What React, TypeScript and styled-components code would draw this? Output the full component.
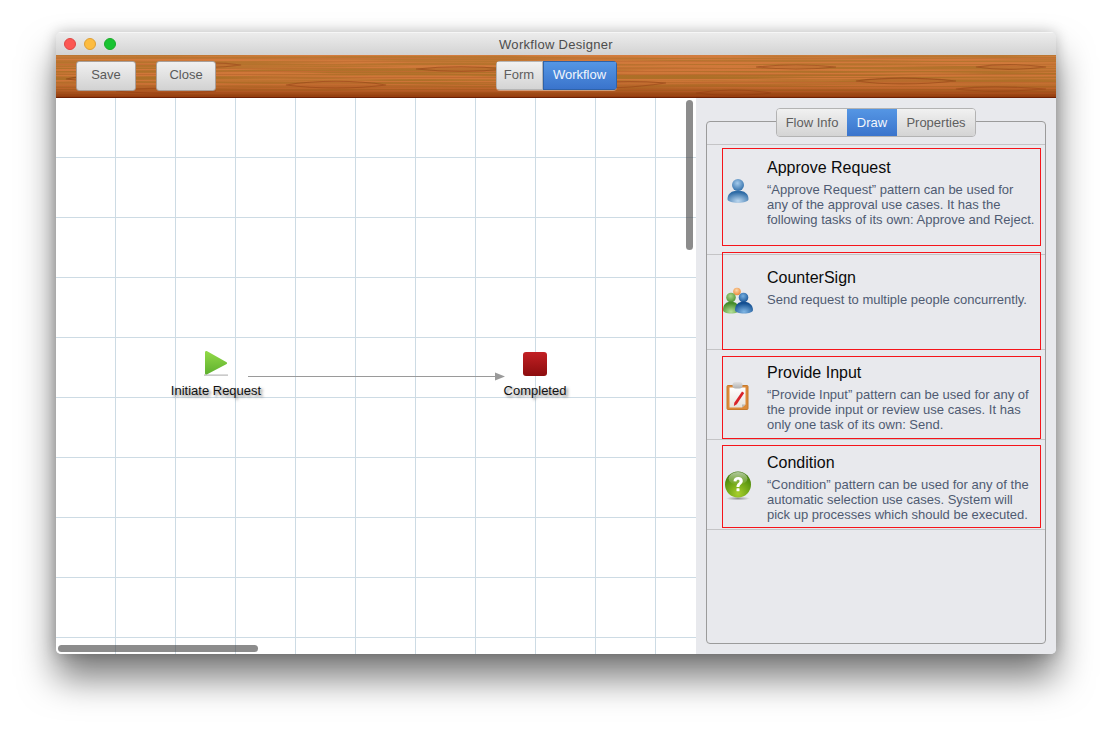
import React from "react";
import styled, { createGlobalStyle } from "styled-components";

const Global = createGlobalStyle`
  html, body { margin: 0; padding: 0; background: #fff; }
  body { font-family: "Liberation Sans", Arial, sans-serif; }
`;

const Page = styled.div`
  width: 1112px;
  height: 734px;
  padding: 32px 56px 0;
  box-sizing: border-box;
  overflow: hidden;
`;

const Win = styled.div`
  width: 1000px;
  height: 622px;
  border-radius: 5px;
  overflow: hidden;
  display: flex;
  flex-direction: column;
  background: #e8e9ed;
  box-shadow: 0 24px 36px rgba(0, 0, 0, 0.52), 0 0 14px rgba(0, 0, 0, 0.22);
`;

const TitleBar = styled.div`
  height: 23px;
  flex: none;
  position: relative;
  display: flex;
  align-items: center;
  justify-content: center;
  background: linear-gradient(#ececec, #d3d3d3);
  border-top: 1px solid #f6f6f6;
  box-sizing: border-box;
`;

const Traffic = styled.div`
  position: absolute;
  left: 8px;
  top: 5px;
  display: flex;
  gap: 8px;
`;

const Light = styled.span<{ $c: string; $b: string }>`
  width: 12px;
  height: 12px;
  border-radius: 50%;
  box-sizing: border-box;
  background: ${(p) => p.$c};
  border: 1px solid ${(p) => p.$b};
`;

const Title = styled.div`
  font-size: 13px;
  letter-spacing: 0.3px;
  color: #4d4d4d;
`;

const Toolbar = styled.div`
  height: 43px;
  flex: none;
  position: relative;
  display: grid;
  grid-template-columns: 1fr auto 1fr;
  align-items: start;
  padding-top: 6px;
  box-sizing: border-box;
  border-bottom: 1px solid #6e2004;
  background: #b9602a;
  overflow: hidden;
`;

const Wood = styled.svg`
  position: absolute;
  inset: 0;
  width: 100%;
  height: 100%;
`;

const ToolLeft = styled.div`
  position: relative;
  display: flex;
  gap: 20px;
  padding-left: 20px;
`;

const ToolButton = styled.button`
  width: 60px;
  height: 30px;
  padding: 0 0 3px;
  border: 1px solid #a89f9a;
  border-radius: 3px;
  background: linear-gradient(#f0f0f0, #d2d2d2);
  color: #5a5a5a;
  font: 13px "Liberation Sans", Arial, sans-serif;
`;

const Segment = styled.div`
  position: relative;
  display: flex;
  height: 29px;
  border-radius: 4px;
  overflow: hidden;
  box-shadow: 0 1px 0 rgba(255, 255, 255, 0.4);
`;

const SegItem = styled.div<{ $active?: boolean; $w: number }>`
  width: ${(p) => p.$w}px;
  display: flex;
  align-items: center;
  justify-content: center;
  padding-bottom: 2px;
  font-size: 13px;
  box-sizing: border-box;
  color: ${(p) => (p.$active ? "#f2f6fc" : "#5e5e5e")};
  background: ${(p) =>
    p.$active ? "linear-gradient(#5596e4, #3a74cc)" : "linear-gradient(#f1f1f1, #d4d4d4)"};
  border: 1px solid ${(p) => (p.$active ? "#2f62a8" : "#b5b5b5")};
`;

const Body = styled.div`
  flex: 1;
  display: flex;
  min-height: 0;
`;

const Canvas = styled.div`
  width: 640px;
  flex: none;
  position: relative;
  overflow: hidden;
  background-color: #fff;
  background-image:
    linear-gradient(to right, transparent 59px, #cddbe4 59px),
    linear-gradient(to bottom, transparent 59px, #cddbe4 59px);
  background-size: 60px 60px;
`;

const Node = styled.div<{ $x: number; $y: number; $w: number }>`
  position: absolute;
  left: ${(p) => p.$x}px;
  top: ${(p) => p.$y}px;
  width: ${(p) => p.$w}px;
  display: flex;
  flex-direction: column;
  align-items: center;
  gap: 6px;
`;

const NodeLabel = styled.div`
  font-size: 13px;
  line-height: 15px;
  color: #111;
  white-space: nowrap;
  text-shadow: 2px 2px 3px rgba(0, 0, 0, 0.5);
`;

const Connector = styled.svg`
  position: absolute;
  left: 190px;
  top: 270px;
`;

const VThumb = styled.div`
  position: absolute;
  left: 630px;
  top: 2px;
  width: 7px;
  height: 150px;
  border-radius: 4px;
  background: rgba(70, 70, 70, 0.62);
`;

const HThumb = styled.div`
  position: absolute;
  left: 2px;
  top: 547px;
  width: 200px;
  height: 7px;
  border-radius: 4px;
  background: rgba(70, 70, 70, 0.62);
`;

const Side = styled.div`
  flex: 1;
  padding: 23px 10px 10px;
  background: #e8e9ed;
`;

const Frame = styled.div`
  position: relative;
  height: 100%;
  box-sizing: border-box;
  border: 1px solid #9b9b9b;
  border-radius: 4px;
  padding-top: 22px;
`;

const Tabs = styled.div`
  position: absolute;
  top: -14px;
  left: 69px;
  display: flex;
  height: 29px;
  border-radius: 4px;
  overflow: hidden;
  border: 1px solid #b3b3b3;
  box-sizing: border-box;
`;

const Tab = styled.div<{ $active?: boolean; $w: number }>`
  width: ${(p) => p.$w}px;
  display: flex;
  align-items: center;
  justify-content: center;
  padding-bottom: 1px;
  font-size: 13px;
  color: ${(p) => (p.$active ? "#f2f6fc" : "#5e5e5e")};
  background: ${(p) =>
    p.$active ? "linear-gradient(#5596e4, #3a74cc)" : "linear-gradient(#f1f1f1, #d4d4d4)"};
`;

const List = styled.div`
  border-top: 1px solid #c4c4c6;
`;

const Row = styled.div<{ $h: number }>`
  position: relative;
  height: ${(p) => p.$h}px;
  box-sizing: border-box;
  border-bottom: 1px solid #c4c4c6;
  display: flex;
  padding-left: 15px;
`;

const Outline = styled.div<{ $top: number; $h: number }>`
  position: absolute;
  left: 15px;
  top: ${(p) => p.$top}px;
  width: 319px;
  height: ${(p) => p.$h}px;
  box-sizing: border-box;
  border: 1px solid #f5141a;
  pointer-events: none;
`;

const IconCell = styled.div`
  width: 32px;
  height: 92px;
  flex: none;
  display: flex;
  align-items: center;
  justify-content: center;
`;

const RowText = styled.div<{ $pad: number }>`
  margin-left: 13px;
  padding-top: ${(p) => p.$pad}px;
  width: 270px;
`;

const RowTitle = styled.div`
  font-size: 16px;
  line-height: 18px;
  color: #0b0b0b;
`;

const RowDesc = styled.div`
  margin-top: 5px;
  font-size: 13px;
  line-height: 15px;
  color: #4f5b72;
`;

const PersonIcon = () => (
  <svg width="24" height="26" viewBox="0 0 24 26">
    <defs>
      <radialGradient id="pa" cx="45%" cy="35%" r="70%">
        <stop offset="0" stopColor="#a5cbec" />
        <stop offset="1" stopColor="#2b6aa6" />
      </radialGradient>
      <radialGradient id="pb" cx="50%" cy="85%" r="70%">
        <stop offset="0" stopColor="#bcd8f0" />
        <stop offset="1" stopColor="#2f6ca6" />
      </radialGradient>
    </defs>
    <path d="M1.500 21c0-5 4-8.500 10.500-8.500S22.500 16 22.500 21c0 2.500-4.500 3.800-10.500 3.800S1.500 23.500 1.500 21z" fill="url(#pb)" />
    <circle cx="12" cy="7" r="6" fill="url(#pa)" />
  </svg>
);

const GroupIcon = () => (
  <svg width="32" height="28" viewBox="0 0 32 28">
    <defs>
      <radialGradient id="ga" cx="45%" cy="35%" r="70%">
        <stop offset="0" stopColor="#a8d68a" />
        <stop offset="1" stopColor="#4a9030" />
      </radialGradient>
      <radialGradient id="gb" cx="50%" cy="85%" r="70%">
        <stop offset="0" stopColor="#b4e096" />
        <stop offset="1" stopColor="#458c2c" />
      </radialGradient>
      <radialGradient id="gc" cx="45%" cy="35%" r="70%">
        <stop offset="0" stopColor="#74aee0" />
        <stop offset="1" stopColor="#134f92" />
      </radialGradient>
      <radialGradient id="gd" cx="50%" cy="85%" r="70%">
        <stop offset="0" stopColor="#80b6e4" />
        <stop offset="1" stopColor="#134f92" />
      </radialGradient>
      <radialGradient id="ge" cx="45%" cy="35%" r="70%">
        <stop offset="0" stopColor="#fcd8ac" />
        <stop offset="1" stopColor="#ea8430" />
      </radialGradient>
    </defs>
    <circle cx="15" cy="4.500" r="3.800" fill="url(#ge)" />
    <circle cx="9" cy="10.500" r="4.800" fill="url(#ga)" />
    <path d="M1 23c0-5 3-8.500 8-8.500s8 3.500 8 8.500c0 2-3 3.500-8 3.500S1 25 1 23z" fill="url(#gb)" />
    <circle cx="21.500" cy="10.500" r="4.800" fill="url(#gc)" />
    <path d="M13 23c0-5 3.500-8.500 8.500-8.500S31 18 31 23c0 2-4 3.500-9 3.500S13 25 13 23z" fill="url(#gd)" />
  </svg>
);

const ClipboardIcon = () => (
  <svg width="24" height="30" viewBox="0 0 24 30">
    <defs>
      <linearGradient id="ca" x1="0" y1="0" x2="0" y2="1">
        <stop offset="0" stopColor="#fff" />
        <stop offset="1" stopColor="#e6e2dc" />
      </linearGradient>
      <linearGradient id="cb" x1="0" y1="0" x2="0" y2="1">
        <stop offset="0" stopColor="#e0e0e0" />
        <stop offset="1" stopColor="#b0b0b0" />
      </linearGradient>
    </defs>
    <rect x="1" y="4.500" width="21" height="24" rx="1" fill="#dc8a38" stroke="#c67a2c" />
    <path d="M3.500 6.500h16v17l-3.500 3H3.500z" fill="url(#ca)" />
    <path d="M19.500 23.500l-3.500 3v-3z" fill="#bdb8b0" />
    <rect x="6.500" y="1" width="10" height="6.500" rx="3" fill="url(#cb)" />
    <path d="M16 10.500l2.200 1.400-7.400 11.300-2.900 1.700.4-3.200z" fill="#d9232a" />
  </svg>
);

const QuestionIcon = () => (
  <svg width="28" height="30" viewBox="0 0 28 30">
    <defs>
      <radialGradient id="qa" cx="50%" cy="85%" r="85%">
        <stop offset="0" stopColor="#a8cf2c" />
        <stop offset="0.6" stopColor="#659e14" />
        <stop offset="1" stopColor="#3b7508" />
      </radialGradient>
      <linearGradient id="qh" x1="0" y1="0" x2="0" y2="1">
        <stop offset="0" stopColor="#fff" stopOpacity="0.6" />
        <stop offset="1" stopColor="#fff" stopOpacity="0" />
      </linearGradient>
      <radialGradient id="qs">
        <stop offset="0" stopColor="#666" stopOpacity="0.7" />
        <stop offset="1" stopColor="#666" stopOpacity="0" />
      </radialGradient>
    </defs>
    <ellipse cx="14" cy="27.500" rx="12" ry="2" fill="url(#qs)" />
    <circle cx="14" cy="13.500" r="13" fill="url(#qa)" />
    <ellipse cx="14" cy="7.500" rx="9.500" ry="6.500" fill="url(#qh)" />
    <path d="M9.500 10.200c.2-2.800 2.100-4.200 4.700-4.200 2.700 0 4.600 1.500 4.600 3.900 0 3-3.300 3.400-3.300 6h-3c0-3.600 3.100-4 3.100-5.800 0-.8-.6-1.400-1.500-1.400-1 0-1.600.6-1.700 1.700z" fill="#fff" />
    <rect x="12.500" y="17.200" width="3" height="3" rx="0.5" fill="#fff" />
  </svg>
);

const PlayIcon = () => (
  <svg width="26" height="27" viewBox="0 0 26 27" style={{ display: "block" }}>
    <defs>
      <linearGradient id="ply" x1="0" y1="0" x2="0" y2="1">
        <stop offset="0" stopColor="#93da48" />
        <stop offset="1" stopColor="#5eb02e" />
      </linearGradient>
    </defs>
    <rect x="1" y="24.600" width="24" height="1" fill="#a9a9a9" />
    <path d="M2 2.600c0-1.400 1-2 2.200-1.300l19 10.600c1.200.7 1.200 1.700 0 2.400l-19 10c-1.200.7-2.200.1-2.200-1.300z" fill="url(#ply)" />
  </svg>
);

const StopIcon = () => (
  <svg width="26" height="26" viewBox="0 0 26 26" style={{ display: "block" }}>
    <defs>
      <linearGradient id="stp" x1="0" y1="0" x2="0" y2="1">
        <stop offset="0" stopColor="#c22024" />
        <stop offset="1" stopColor="#8c0d0e" />
      </linearGradient>
    </defs>
    <rect x="1" y="1" width="24" height="24" rx="3" fill="url(#stp)" />
  </svg>
);

const rows = [
  {
    title: "Approve Request",
    desc: "“Approve Request” pattern can be used for any of the approval use cases. It has the following tasks of its own: Approve and Reject.",
    icon: <PersonIcon />, h: 110, pad: 14, top: 3, oh: 98,
  },
  {
    title: "CounterSign",
    desc: "Send request to multiple people concurrently.",
    icon: <GroupIcon />, h: 95, pad: 14, top: -3, oh: 98,
  },
  {
    title: "Provide Input",
    desc: "“Provide Input” pattern can be used for any of the provide input or review use cases. It has only one task of its own: Send.",
    icon: <ClipboardIcon />, h: 90, pad: 14, top: 6, oh: 83,
  },
  {
    title: "Condition",
    desc: "“Condition” pattern can be used for any of the automatic selection use cases. System will pick up processes which should be executed.",
    icon: <QuestionIcon />, h: 90, pad: 14, top: 5, oh: 83,
  },
];

const woodStreaks = [
  "M10 24c20-4 45-4 70 0c-25 3-50 3-70 0z",
  "M120 10c25-3 45-3 65 0c-20 3-45 3-65 0z",
  "M230 30c30-5 70-5 100 0c-30 4-70 4-100 0z",
  "M360 14c30-3 60-3 90 0c-30 3-60 3-90 0z",
  "M520 31c20-4 50-6 90-3c-30 4-60 7-90 3z",
  "M640 38c25-4 50-4 75 0c-25 3-50 3-75 0z",
  "M700 12c30-3 50-3 80 0c-30 3-50 3-80 0z",
  "M800 26c30-4 60-4 100 0c-40 4-70 4-100 0z",
  "M900 34c25-3 50-3 90 0c-40 3-65 3-90 0z",
  "M920 12c20-3 45-3 70 0c-25 3-50 3-70 0z",
  "M60 36c30-4 60-4 100 0c-40 3-70 3-100 0z",
];

const woodLines = [3, 6, 9, 13, 16, 19, 22, 27, 31, 34, 37, 39];

export default function App() {
  return (
    <Page>
      <Global />
      <Win>
        <TitleBar>
          <Traffic>
            <Light $c="#fc5753" $b="#df4744" />
            <Light $c="#fdbc40" $b="#de9f34" />
            <Light $c="#19c332" $b="#1aab29" />
          </Traffic>
          <Title>Workflow Designer</Title>
        </TitleBar>
        <Toolbar>
          <Wood viewBox="0 0 1000 42" preserveAspectRatio="none">
            <defs>
              <linearGradient id="woodShade" x1="0" y1="0" x2="0" y2="1">
                <stop offset="0" stopColor="#dd8a4c" stopOpacity="0.3" />
                <stop offset="0.55" stopColor="#cf7436" stopOpacity="0" />
                <stop offset="1" stopColor="#8a3006" stopOpacity="0.85" />
              </linearGradient>
              <filter id="grain" x="0" y="0" width="100%" height="100%">
                <feTurbulence type="fractalNoise" baseFrequency="0.004 0.55" numOctaves="3" seed="11" />
                <feColorMatrix
                  type="matrix"
                  values="0 0 0 0 0.42  0 0 0 0 0.16  0 0 0 0 0.02  4 0 0 0 -1.5"
                />
              </filter>
            </defs>
            <rect width="1000" height="42" fill="#cf7739" />
            {woodLines.map((y) => (
              <rect key={y} y={y} width="1000" height="1" fill="#9c4a18" fillOpacity="0.28" />
            ))}
            <rect width="1000" height="42" filter="url(#grain)" />
            {woodStreaks.map((d) => (
              <path key={d} d={d} fill="#c06a30" fillOpacity="0.5" stroke="#8a3c12" strokeOpacity="0.6" strokeWidth="1.100" />
            ))}
            <rect width="1000" height="42" fill="url(#woodShade)" />
          </Wood>
          <ToolLeft>
            <ToolButton>Save</ToolButton>
            <ToolButton>Close</ToolButton>
          </ToolLeft>
          <Segment>
            <SegItem $w={47}>Form</SegItem>
            <SegItem $w={74} $active>Workflow</SegItem>
          </Segment>
        </Toolbar>
        <Body>
          <Canvas>
            <Node $x={105} $y={252} $w={110}>
              <PlayIcon />
              <NodeLabel>Initiate Request</NodeLabel>
            </Node>
            <Connector width="262" height="14" viewBox="0 0 262 14">
              <path d="M2 8.500H250" stroke="#9a9a9a" strokeWidth="1" fill="none" />
              <path d="M249 4.500l10 4-10 4z" fill="#9a9a9a" />
            </Connector>
            <Node $x={424} $y={253} $w={110}>
              <StopIcon />
              <NodeLabel>Completed</NodeLabel>
            </Node>
            <VThumb />
            <HThumb />
          </Canvas>
          <Side>
            <Frame>
              <Tabs>
                <Tab $w={70}>Flow Info</Tab>
                <Tab $w={50} $active>Draw</Tab>
                <Tab $w={78}>Properties</Tab>
              </Tabs>
              <List>
                {rows.map((r) => (
                  <Row key={r.title} $h={r.h}>
                    <IconCell>{r.icon}</IconCell>
                    <RowText $pad={r.pad}>
                      <RowTitle>{r.title}</RowTitle>
                      <RowDesc>{r.desc}</RowDesc>
                    </RowText>
                    <Outline $top={r.top} $h={r.oh} />
                  </Row>
                ))}
              </List>
            </Frame>
          </Side>
        </Body>
      </Win>
    </Page>
  );
}
